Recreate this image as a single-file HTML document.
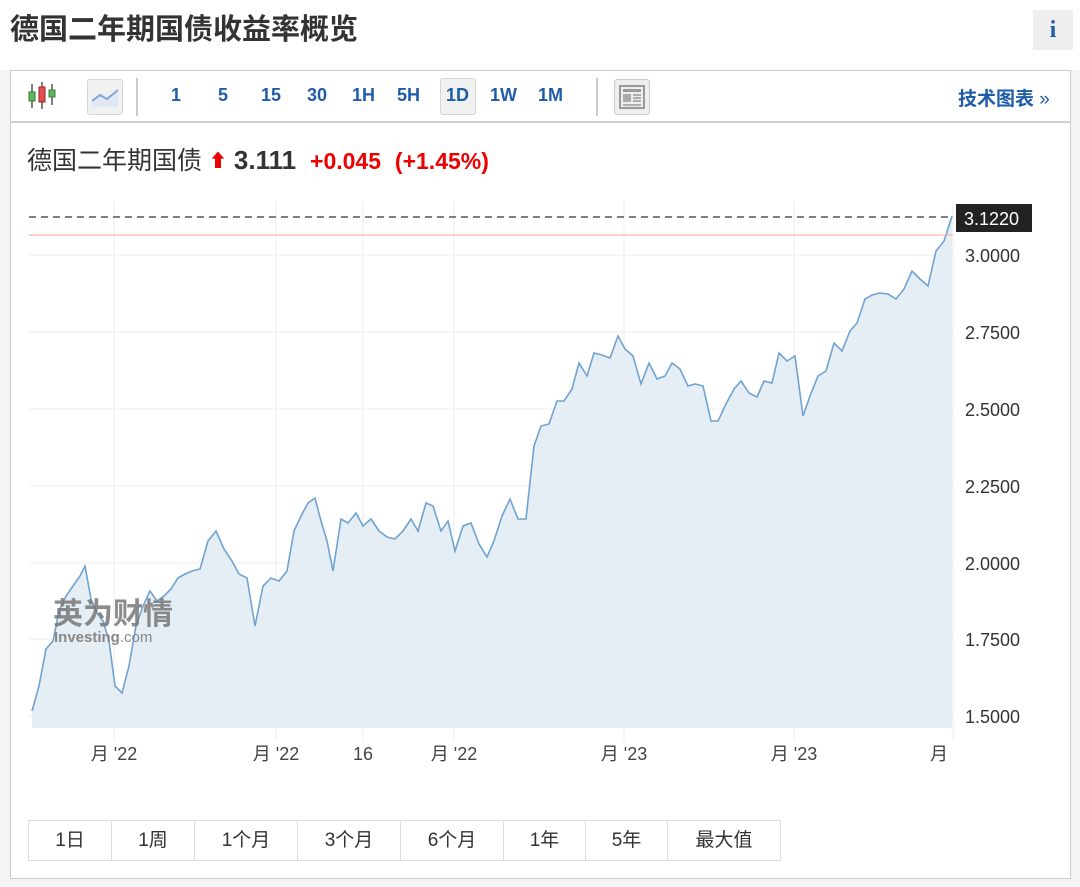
<!DOCTYPE html>
<html><head><meta charset="utf-8"><style>
*{margin:0;padding:0;box-sizing:border-box}
body{width:1080px;height:886px;background:#f4f4f4;font-family:"Liberation Sans","Noto Sans CJK SC",sans-serif;position:relative;overflow:hidden}
.top{position:absolute;left:0;top:0;width:1080px;height:70px;background:#fff}
h1{position:absolute;left:10px;top:6px;font-size:29px;font-weight:bold;color:#333;letter-spacing:0px}
.info{position:absolute;left:1033px;top:10px;width:40px;height:40px;background:#eee;color:#1f5da8;font:bold 24px "Liberation Serif",serif;text-align:center;line-height:40px}
.box{position:absolute;left:10px;top:70px;width:1061px;height:809px;background:#fff;border:1px solid #ccc}
.tb{position:absolute;left:0;top:0;width:1059px;height:52px;border-bottom:2px solid #d0d0d0}
.t{position:absolute;top:14px;font-size:18px;font-weight:bold;color:#1f5da8}
.sel{position:absolute;left:429px;top:7px;width:36px;height:37px;background:#f1f1f1;border:1px solid #d6d6d6;border-radius:3px}
.sep{position:absolute;top:7px;width:2px;height:38px;background:#ccc}
.q{position:absolute;left:16px;top:70px;font-size:25px;color:#333;white-space:nowrap}
.q b{color:#333;font-size:26px}.q .r{color:#e00;font-weight:bold;font-size:23px}
.btns{position:absolute;left:17px;top:749px;height:41px;border:1px solid #ddd;display:flex}
.btns div{border-right:1px solid #ddd;font-size:19px;color:#333;text-align:center;line-height:39px}
.btns div:last-child{border-right:none}
</style></head><body>
<div class="top"></div>
<h1>德国二年期国债收益率概览</h1>
<div class="info">i</div>
<div class="box">
 <div class="tb">
  <svg style="position:absolute;left:16px;top:10px" width="32" height="30" viewBox="0 0 32 30">
   <line x1="5" y1="3" x2="5" y2="27" stroke="#555" stroke-width="1.5"/><rect x="2" y="11" width="6" height="9" fill="#5cb85c" stroke="#3a7a3a"/>
   <line x1="15" y1="1" x2="15" y2="28" stroke="#555" stroke-width="1.5"/><rect x="12" y="6" width="6" height="15" fill="#e05050" stroke="#a02020"/>
   <line x1="25" y1="3" x2="25" y2="24" stroke="#555" stroke-width="1.5"/><rect x="22" y="9" width="6" height="7" fill="#5cb85c" stroke="#3a7a3a"/>
  </svg>
  <div style="position:absolute;left:76px;top:8px;width:36px;height:36px;background:#f1f1f1;border:1px solid #d6d6d6;border-radius:3px"></div>
  <svg style="position:absolute;left:80px;top:14px" width="28" height="24" viewBox="0 0 28 24"><path d="M1 16 L9 10 L16 14 L27 5 L27 22 L1 22Z" fill="#dfe8f4"/><path d="M1 16 L9 10 L16 14 L27 5" stroke="#7ea6d6" stroke-width="2" fill="none"/></svg>
  <div class="sep" style="left:125px"></div>
  <div class="sel"></div>
  <span class="t" style="left:160px">1</span>
  <span class="t" style="left:207px">5</span>
  <span class="t" style="left:250px">15</span>
  <span class="t" style="left:296px">30</span>
  <span class="t" style="left:341px">1H</span>
  <span class="t" style="left:386px">5H</span>
  <span class="t" style="left:435px">1D</span>
  <span class="t" style="left:479px">1W</span>
  <span class="t" style="left:527px">1M</span>
  <div class="sep" style="left:585px"></div>
  <div style="position:absolute;left:603px;top:8px;width:36px;height:36px;background:#eee;border:1px solid #ccc;border-radius:3px"></div>
  <svg style="position:absolute;left:608px;top:14px" width="26" height="24" viewBox="0 0 26 24"><rect x="1" y="1" width="24" height="22" fill="#eee" stroke="#999" stroke-width="2"/><rect x="4" y="4" width="18" height="3" fill="#999"/><rect x="4" y="9" width="8" height="8" fill="#aaa"/><path d="M14 10h8M14 13h8M14 16h8M4 20h18" stroke="#999" stroke-width="1.5"/></svg>
  <span class="t" style="left:947px;font-size:19px;top:13px">技术图表 <span style="font-weight:normal">»</span></span>
 </div>
 <div class="q">德国二年期国债 <span style="color:#e00;font-size:18px;vertical-align:2px">&#x2B06;</span> <b>3.111</b>&nbsp; <span class="r">+0.045</span>&nbsp; <span class="r">(+1.45%)</span></div>
 <svg style="position:absolute;left:-10px;top:-70px" width="1080" height="886">
  <g stroke="#eee" stroke-width="1">
   <line x1="28" y1="254" x2="952" y2="254"/><line x1="28" y1="331" x2="952" y2="331"/><line x1="28" y1="408" x2="952" y2="408"/><line x1="28" y1="485" x2="952" y2="485"/><line x1="28" y1="562" x2="952" y2="562"/><line x1="28" y1="638" x2="952" y2="638"/><line x1="28" y1="715" x2="952" y2="715"/>
   <line x1="113" y1="200" x2="113" y2="740"/><line x1="275" y1="200" x2="275" y2="740"/><line x1="362" y1="200" x2="362" y2="740"/><line x1="453" y1="200" x2="453" y2="740"/><line x1="623" y1="200" x2="623" y2="740"/><line x1="793" y1="200" x2="793" y2="740"/><line x1="952" y1="200" x2="952" y2="740"/>
  </g>
  <polygon fill="#dfe8f3" fill-opacity="0.8" points="31,727 31,710 38,685 45,648 52,640 58,610 65,595 72,585 79,575 84,565 90,598 96,612 102,620 108,640 114,685 121,692 128,665 135,625 142,605 149,590 156,600 163,595 170,588 177,577 184,573 191,570 199,568 207,540 215,530 223,548 231,560 238,573 246,577 254,625 262,585 270,577 278,580 286,570 293,530 300,515 307,502 314,497 320,520 326,540 332,570 340,518 347,522 355,512 362,525 370,518 378,530 386,536 394,538 402,530 410,518 417,530 425,502 432,505 440,530 447,520 454,550 462,525 470,522 478,543 486,556 493,540 501,515 509,498 517,518 525,518 533,445 540,425 548,423 556,400 563,400 571,388 578,362 586,375 593,352 601,354 609,357 617,335 624,348 632,355 640,383 648,362 656,378 664,375 671,362 679,368 687,385 694,383 702,385 710,420 717,420 725,403 733,388 740,380 748,392 756,396 763,380 771,382 778,352 786,360 794,355 802,415 809,395 817,375 825,370 833,342 841,350 849,330 856,322 864,298 871,294 879,292 887,293 895,298 903,288 911,270 919,278 927,285 935,250 943,240 951,215 951,727"/>
  <polyline fill="none" stroke="#6fa3d2" stroke-width="1.6" points="31,710 38,685 45,648 52,640 58,610 65,595 72,585 79,575 84,565 90,598 96,612 102,620 108,640 114,685 121,692 128,665 135,625 142,605 149,590 156,600 163,595 170,588 177,577 184,573 191,570 199,568 207,540 215,530 223,548 231,560 238,573 246,577 254,625 262,585 270,577 278,580 286,570 293,530 300,515 307,502 314,497 320,520 326,540 332,570 340,518 347,522 355,512 362,525 370,518 378,530 386,536 394,538 402,530 410,518 417,530 425,502 432,505 440,530 447,520 454,550 462,525 470,522 478,543 486,556 493,540 501,515 509,498 517,518 525,518 533,445 540,425 548,423 556,400 563,400 571,388 578,362 586,375 593,352 601,354 609,357 617,335 624,348 632,355 640,383 648,362 656,378 664,375 671,362 679,368 687,385 694,383 702,385 710,420 717,420 725,403 733,388 740,380 748,392 756,396 763,380 771,382 778,352 786,360 794,355 802,415 809,395 817,375 825,370 833,342 841,350 849,330 856,322 864,298 871,294 879,292 887,293 895,298 903,288 911,270 919,278 927,285 935,250 943,240 951,215"/>
  <line x1="28" y1="234" x2="952" y2="234" stroke="#f4a89a" stroke-width="1"/>
  <line x1="28" y1="216" x2="952" y2="216" stroke="#333" stroke-width="1.2" stroke-dasharray="7,5"/>
  <rect x="955" y="203" width="76" height="28" fill="#222"/>
  <text x="963" y="224" fill="#fff" font-size="18" font-family="Liberation Sans,sans-serif">3.1220</text>
  <g font-size="18" fill="#333" font-family="Liberation Sans,sans-serif">
   <text x="964" y="261">3.0000</text><text x="964" y="338">2.7500</text><text x="964" y="415">2.5000</text><text x="964" y="492">2.2500</text><text x="964" y="569">2.0000</text><text x="964" y="645">1.7500</text><text x="964" y="722">1.5000</text>
  </g>
  <g font-size="18" fill="#444" font-family="Liberation Sans,Noto Sans CJK SC,sans-serif" text-anchor="middle">
   <text x="113" y="759">月 '22</text><text x="275" y="759">月 '22</text><text x="362" y="759">16</text><text x="453" y="759">月 '22</text><text x="623" y="759">月 '23</text><text x="793" y="759">月 '23</text><text x="938" y="759">月</text>
  </g>
  <text x="52" y="623" font-size="30" font-weight="bold" fill="#777" opacity="0.85" font-family="Noto Sans CJK SC,sans-serif">英为财情</text>
  <text x="53" y="641" font-size="15" font-weight="bold" fill="#888" font-family="Liberation Sans,sans-serif">Investing<tspan font-weight="normal">.com</tspan></text>
 </svg>
 <div class="btns">
  <div style="width:83px">1日</div><div style="width:83px">1周</div><div style="width:103px">1个月</div><div style="width:103px">3个月</div><div style="width:103px">6个月</div><div style="width:82px">1年</div><div style="width:82px">5年</div><div style="width:112px">最大值</div>
 </div>
</div>
</body></html>
